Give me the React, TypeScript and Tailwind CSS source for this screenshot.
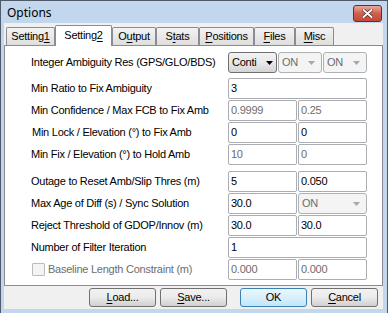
import React from 'react'

const U = ({ children }: { children: React.ReactNode }) => (
  <span className="underline underline-offset-[2px]">{children}</span>
)

const Arrow = ({ color }: { color: string }) => (
  <svg width="7" height="4" viewBox="0 0 7 4" className="shrink-0">
    <path d="M0 0h7L3.5 4z" fill={color} />
  </svg>
)

function Tab({ w, selected, children }: { w: string; selected?: boolean; children: React.ReactNode }) {
  if (selected) {
    return (
      <div
        className={`${w} relative z-10 -mb-px flex h-[21px] items-center justify-center rounded-t-[2px] border border-b-0 border-[#898c95] bg-white pb-[2px]`}
      >
        {children}
      </div>
    )
  }
  return (
    <div
      className={`${w} flex h-[18px] items-center justify-center rounded-t-[2px] border border-b-0 border-[#898c95] bg-gradient-to-b from-[#f3f3f3] to-[#dedede]`}
    >
      {children}
    </div>
  )
}

function Field({ value, wide, disabled }: { value: string; wide?: boolean; disabled?: boolean }) {
  return (
    <div
      className={`${wide ? 'w-[139px]' : 'w-[69px]'} flex h-[21px] items-center rounded-[2px] border border-[#abadb3] bg-white pl-[2px] ${
        disabled ? 'text-[#6d6d6d]' : 'text-black'
      }`}
    >
      {value}
    </div>
  )
}

function Combo({ value, w, disabled }: { value: string; w: string; disabled?: boolean }) {
  if (disabled) {
    return (
      <div
        className={`${w} flex h-[21px] items-center justify-between rounded-[3px] border border-[#adb2b5] bg-[#f4f4f4] pl-[3px] pr-[6px] text-[#6d6d6d]`}
      >
        <span>{value}</span>
        <Arrow color="#a7a7a7" />
      </div>
    )
  }
  return (
    <div
      className={`${w} flex h-[21px] items-center justify-between rounded-[3px] border border-[#707070] bg-gradient-to-b from-[#f2f2f2] via-[#e8e8e8] to-[#d4d4d4] pl-[3px] pr-[3px] text-black`}
    >
      <span>{value}</span>
      <Arrow color="#000" />
    </div>
  )
}

function Row({ label, children, shift }: { label: React.ReactNode; children: React.ReactNode; shift?: boolean }) {
  return (
    <div className="flex h-[21px] items-center">
      <div className={`w-[197px] whitespace-nowrap ${shift ? 'pl-px' : ''}`}>{label}</div>
      <div className="flex w-[139px] gap-px">{children}</div>
    </div>
  )
}

function Button({ children, primary }: { children: React.ReactNode; primary?: boolean }) {
  return (
    <div
      className={`flex h-[19px] w-[67px] items-center justify-center rounded-[3px] border ${
        primary
          ? 'border-[#3c7fb1] bg-gradient-to-b from-[#eaf6fd] via-[#d9f0fc] to-[#bee6fd]'
          : 'border-[#707070] bg-gradient-to-b from-[#f2f2f2] via-[#ebebeb] to-[#cfcfcf]'
      }`}
    >
      {children}
    </div>
  )
}

export default function App() {
  return (
    <div className="flex h-[313px] w-[388px] flex-col border-l border-r border-t border-[#4f5b6b] bg-[#c2d6ed] font-['Liberation_Sans',Arial,sans-serif] text-[11px] tracking-[-0.25px] text-black">
      {/* Title bar */}
      <div className="flex h-[22px] shrink-0 items-center justify-between pl-[6px] pr-[5px]">
        <span className="pt-[2px] font-['Noto_Sans',sans-serif] text-[12px] tracking-normal">Options</span>
        <div className="mt-[3px] flex h-[17px] w-[29px] items-center justify-center rounded-[3px] border border-[#6b2b2b] bg-gradient-to-b from-[#e9a99b] via-[#d0604f] to-[#c24a36]">
          <svg width="11" height="9" viewBox="0 0 11 9">
            <path d="M1.5 1l8 7M9.5 1l-8 7" stroke="#5a2020" strokeWidth="3.4" strokeLinecap="round" />
            <path d="M1.5 1l8 7M9.5 1l-8 7" stroke="#fff" strokeWidth="2" strokeLinecap="round" />
          </svg>
        </div>
      </div>

      {/* Client */}
      <div className="ml-[3px] mr-[4px] flex h-[286px] flex-col bg-[#f0f0f0]">
        {/* Tabs */}
        <div className="flex h-[22px] items-end pl-[2px]">
          <Tab w="w-[49px]">
            Setting<U>1</U>
          </Tab>
          <Tab w="w-[57px]" selected>
            Setting<U>2</U>
          </Tab>
          <Tab w="w-[44px]">
            O<U>u</U>tput
          </Tab>
          <Tab w="w-[43px]">
            S<U>t</U>ats
          </Tab>
          <Tab w="w-[55px]">
            <U>P</U>ositions
          </Tab>
          <Tab w="w-[41px]">
            <U>F</U>iles
          </Tab>
          <Tab w="w-[39px]">
            <U>M</U>isc
          </Tab>
        </div>

        {/* Panel */}
        <div className="flex h-[241px] flex-col border border-[#898c95] bg-white pl-[26px] pt-[6px]">
          <Row label="Integer Ambiguity Res (GPS/GLO/BDS)">
            <Combo value="Conti" w="w-[49px]" />
            <Combo value="ON" w="w-[44px]" disabled />
            <Combo value="ON" w="w-[44px]" disabled />
          </Row>

          <div className="mt-[5px] flex flex-col gap-px">
            <Row label="Min Ratio to Fix Ambiguity">
              <Field value="3" wide />
            </Row>
            <Row label="Min Confidence / Max FCB to Fix Amb">
              <Field value="0.9999" disabled />
              <Field value="0.25" disabled />
            </Row>
            <Row label="Min Lock / Elevation (°) to Fix Amb" shift>
              <Field value="0" />
              <Field value="0" />
            </Row>
            <Row label="Min Fix / Elevation (°) to Hold Amb">
              <Field value="10" disabled />
              <Field value="0" disabled />
            </Row>
          </div>

          <div className="mt-[6px] flex flex-col gap-px">
            <Row label="Outage to Reset Amb/Slip Thres (m)">
              <Field value="5" />
              <Field value="0.050" />
            </Row>
            <Row label="Max Age of Diff (s) / Sync Solution">
              <Field value="30.0" />
              <Combo value="ON" w="w-[69px]" disabled />
            </Row>
            <Row label="Reject Threshold of GDOP/Innov (m)">
              <Field value="30.0" />
              <Field value="30.0" />
            </Row>
            <Row label="Number of Filter Iteration">
              <Field value="1" wide />
            </Row>
            <Row
              shift
              label={
                <div className="flex items-center gap-[3px] text-[#6d6d6d]">
                  <div className="h-[13px] w-[13px] rounded-[1px] border border-[#bcbcbc] bg-[#f4f4f4]" />
                  <span>Baseline Length Constraint (m)</span>
                </div>
              }
            >
              <Field value="0.000" disabled />
              <Field value="0.000" disabled />
            </Row>
          </div>
        </div>

        {/* Buttons */}
        <div className="flex items-start justify-end pr-[5px] pt-[2px]">
          <Button>
            <U>L</U>oad...
          </Button>
          <div className="ml-[4px]">
            <Button>
              <U>S</U>ave...
            </Button>
          </div>
          <div className="ml-[13px]">
            <Button primary>OK</Button>
          </div>
          <div className="ml-[4px]">
            <Button>
              <U>C</U>ancel
            </Button>
          </div>
        </div>
      </div>
    </div>
  )
}
